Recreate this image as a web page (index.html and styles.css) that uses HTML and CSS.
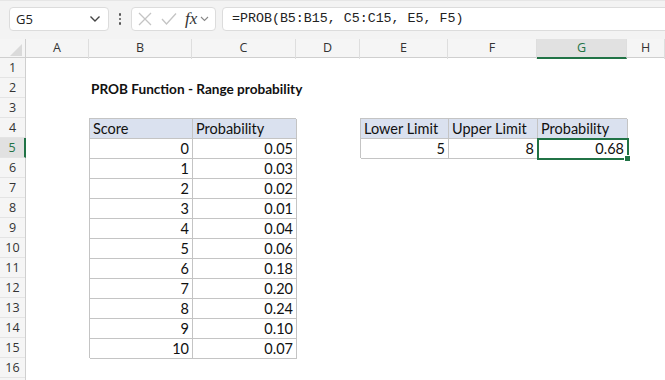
FILE: index.html
```html
<!DOCTYPE html>
<html lang="en">
<head>
    <meta charset="UTF-8">
    <meta name="viewport" content="width=device-width, initial-scale=1.0">
    <title>PROB Function</title>
    <link rel="stylesheet" href="styles.css">
</head>
<body>
    <div class="toolbar">
        <div class="namebox">
            <span>G5</span>
            <svg class="chev" width="12" height="8" viewBox="0 0 12 8"><polyline points="1.5,1.5 6,6 10.5,1.5" fill="none" stroke="#444" stroke-width="1.4"/></svg>
        </div>
        <div class="dots"><i></i><i></i><i></i></div>
        <div class="fxbox">
            <svg width="14" height="14" viewBox="0 0 14 14"><path d="M1 1 L13 13 M13 1 L1 13" stroke="#c4c4c4" stroke-width="1.3"/></svg>
            <svg width="16" height="14" viewBox="0 0 16 14"><polyline points="1,7 5.5,12 15,1.5" fill="none" stroke="#c4c4c4" stroke-width="1.3"/></svg>
            <span class="fx">fx</span>
            <svg width="9" height="6" viewBox="0 0 9 6"><polyline points="1,1 4.5,4.5 8,1" fill="none" stroke="#888" stroke-width="1.1"/></svg>
        </div>
        <div class="formula">=PROB(B5:B15, C5:C15, E5, F5)</div>
    </div>

    <div class="colheads">
        <div class="corner"><span class="tri"></span></div>
        <div class="ch">A</div>
        <div class="ch">B</div>
        <div class="ch">C</div>
        <div class="ch">D</div>
        <div class="ch">E</div>
        <div class="ch">F</div>
        <div class="ch active">G</div>
        <div class="ch">H</div>
    </div>

    <div class="sheet">
        <div class="rowheads">
            <div class="rh">1</div>
            <div class="rh">2</div>
            <div class="rh">3</div>
            <div class="rh">4</div>
            <div class="rh active">5</div>
            <div class="rh">6</div>
            <div class="rh">7</div>
            <div class="rh">8</div>
            <div class="rh">9</div>
            <div class="rh">10</div>
            <div class="rh">11</div>
            <div class="rh">12</div>
            <div class="rh">13</div>
            <div class="rh">14</div>
            <div class="rh">15</div>
            <div class="rh">16</div>
            <div class="rh"></div>
        </div>

        <div class="cells">
            <div class="title">PROB Function - Range probability</div>

            <div class="tbl scores">
                <div class="hd">Score</div><div class="hd">Probability</div>
                <div class="num">0</div><div class="num">0.05</div>
                <div class="num">1</div><div class="num">0.03</div>
                <div class="num">2</div><div class="num">0.02</div>
                <div class="num">3</div><div class="num">0.01</div>
                <div class="num">4</div><div class="num">0.04</div>
                <div class="num">5</div><div class="num">0.06</div>
                <div class="num">6</div><div class="num">0.18</div>
                <div class="num">7</div><div class="num">0.20</div>
                <div class="num">8</div><div class="num">0.24</div>
                <div class="num">9</div><div class="num">0.10</div>
                <div class="num">10</div><div class="num">0.07</div>
            </div>

            <div class="tbl limits">
                <div class="hd">Lower Limit</div><div class="hd">Upper Limit</div><div class="hd">Probability</div>
                <div class="num">5</div><div class="num">8</div><div class="num sel">0.68</div>
            </div>
        </div>
    </div>
</body>
</html>
```

FILE: styles.css
```css
* {
    box-sizing: border-box;
}
body {
    margin: 0;
    background: #fff;
    font-family: Lato, "Open Sans", sans-serif;
    overflow: hidden;
}
.toolbar {
    height: 39px;
    background: #f3f3f3;
    border-top: 1px solid #e6e6e6;
    display: flex;
    align-items: flex-start;
    padding: 6px 0 0 9px;
}
.namebox {
    width: 100px;
    height: 24px;
    background: #fff;
    border: 1px solid #dcdcdc;
    border-radius: 4px;
    display: flex;
    align-items: center;
    justify-content: space-between;
    padding: 0 7px 0 6px;
    font-family: "Open Sans", sans-serif;
    font-size: 13px;
    color: #222;
}
.dots {
    width: 22px;
    height: 24px;
    display: flex;
    flex-direction: column;
    align-items: center;
    justify-content: center;
    gap: 2px;
}
.dots i {
    width: 2.5px;
    height: 2.5px;
    background: #555;
    border-radius: 50%;
}
.fxbox {
    width: 85px;
    height: 24px;
    background: #fff;
    border: 1px solid #dcdcdc;
    border-radius: 4px;
    display: flex;
    align-items: center;
    gap: 9px;
    padding: 0 0 0 6px;
}
.fxbox .fx {
    font-family: "Liberation Serif", serif;
    font-style: italic;
    font-size: 17px;
    color: #333;
    margin-left: -1px;
    margin-right: -6px;
}
.formula {
    flex: 1;
    margin-left: 6px;
    margin-right: -8px;
    height: 24px;
    background: #fff;
    border: 1px solid #dcdcdc;
    border-radius: 4px;
    padding: 0 9px;
    font-family: "Liberation Mono", monospace;
    font-size: 13.3px;
    line-height: 22px;
    color: #222;
}
.colheads {
    display: grid;
    grid-template-columns: 26px 63px 103px 104px 64px 88px 89px 90px 1fr;
    height: 19px;
    background: #f5f5f5;
    border-bottom: 1px solid #cfcfcf;
}
.corner {
    position: relative;
    border-right: 1px solid #cfcfcf;
}
.corner .tri {
    position: absolute;
    right: 3px;
    bottom: 3px;
    width: 0;
    height: 0;
    border-left: 12px solid transparent;
    border-bottom: 12px solid #dadada;
}
.ch {
    font-family: "Open Sans", sans-serif;
    font-size: 12.5px;
    color: #333;
    text-align: center;
    line-height: 18px;
    border-right: 1px solid #dedede;
}
.ch.active {
    background: #e1e1e1;
    color: #217346;
    border-bottom: 2px solid #217346;
}
.sheet {
    display: flex;
}
.rowheads {
    width: 26px;
    background: #f5f5f5;
    border-right: 1px solid #cfcfcf;
}
.rh {
    height: 20px;
    font-family: "Open Sans", sans-serif;
    font-size: 12.5px;
    color: #333;
    text-align: center;
    line-height: 20px;
    border-bottom: 1px solid #e4e4e4;
}
.rh.active {
    background: #e1e1e1;
    color: #217346;
    border-right: 2px solid #217346;
    margin-right: -1px;
}
.cells {
    flex: 1;
    display: grid;
    grid-template-columns: 63px 103px 104px 64px 88px 89px 90px 1fr;
    grid-template-rows: repeat(17, 20px);
    font-size: 14.5px;
    color: #111;
}
.title {
    grid-column: 2 / 5;
    grid-row: 2;
    font-size: 13.6px;
    font-weight: bold;
    padding: 3px 0 0 2px;
}
.tbl {
    display: grid;
    border-top: 1px solid #c4c4c4;
    border-left: 1px solid #c4c4c4;
}
.tbl > div {
    border-right: 1px solid #c4c4c4;
    border-bottom: 1px solid #c4c4c4;
    padding: 1px 3px 0 3px;
    line-height: 18px;
    white-space: nowrap;
}
.scores {
    grid-column: 2 / 4;
    grid-row: 4 / 16;
    grid-template-columns: 103px 104px;
    grid-template-rows: repeat(12, 1fr);
}
.limits {
    grid-column: 5 / 8;
    grid-row: 4 / 6;
    grid-template-columns: 88px 89px 90px;
    grid-template-rows: repeat(2, 1fr);
}
.tbl .hd {
    background: #dae1ef;
}
.tbl .num {
    text-align: right;
}
.tbl .sel {
    position: relative;
    outline: 2px solid #217346;
    outline-offset: -1px;
}
.tbl .sel::after {
    content: "";
    position: absolute;
    right: -4px;
    bottom: -4px;
    width: 5px;
    height: 5px;
    background: #217346;
    border: 1px solid #fff;
}
```
